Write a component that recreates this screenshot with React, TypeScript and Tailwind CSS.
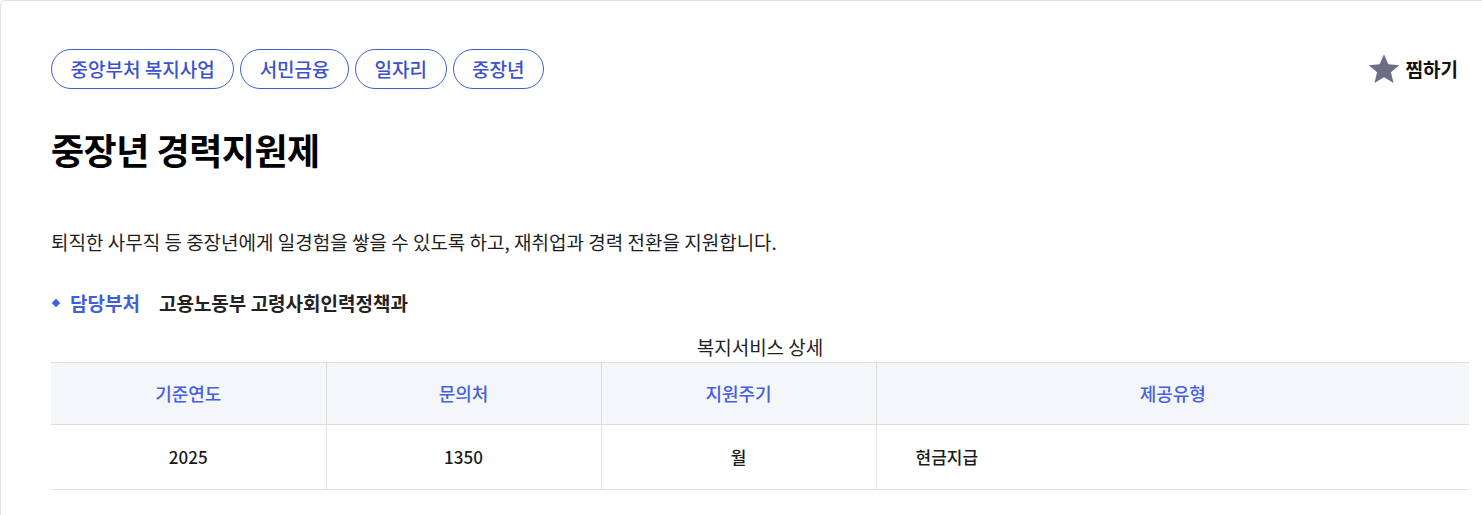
import React from "react";

const tags = ["중앙부처 복지사업", "서민금융", "일자리", "중장년"];

const columns = [
  { label: "기준연도", value: "2025", w: "w-[275px]", align: "text-center" },
  { label: "문의처", value: "1350", w: "w-[275px]", align: "text-center" },
  { label: "지원주기", value: "월", w: "w-[275px]", align: "text-center" },
  { label: "제공유형", value: "현금지급", w: "", align: "text-left pl-[39px]" },
];

function StarIcon() {
  return (
    <svg width="36" height="34" viewBox="0 0 24 24" aria-hidden="true">
      <path
        d="M12 1.6l3.1 7.1 7.6.6-5.8 5 1.8 7.5L12 17.8l-6.7 4 1.8-7.5-5.8-5 7.6-.6z"
        fill="#6b6e85"
      />
    </svg>
  );
}

export default function App() {
  return (
    <div
      className="min-h-[515px] bg-white"
      style={{ fontFamily: '"Noto Sans CJK KR", "Noto Sans", sans-serif' }}
    >
      <div className="w-[1520px] rounded-tl-[6px] border-l border-t border-[#e2e2e2] pl-[50px] pt-[48px] pb-[25px]">
        <div className="w-[1418px]">
          <div className="flex items-center justify-between">
            <div className="flex gap-[6px]">
              {tags.map((t) => (
                <span
                  key={t}
                  className="flex h-[40px] items-center rounded-full border border-[#3f5fd8] px-[18.5px] text-[19px] font-medium text-[#3a52cf]"
                >
                  {t}
                </span>
              ))}
            </div>
            <button
              type="button"
              className="mr-[11px] flex items-center gap-[4px] text-[19px] font-bold text-[#111]"
            >
              <StarIcon />
              찜하기
            </button>
          </div>

          <h1 className="mt-[34px] text-[36px] font-bold leading-[52px] tracking-[-0.5px] text-black">
            중장년 경력지원제
          </h1>

          <p className="mt-[52px] text-[19px] leading-[30px] text-[#1e1e1e]">
            퇴직한 사무직 등 중장년에게 일경험을 쌓을 수 있도록 하고, 재취업과 경력 전환을 지원합니다.
          </p>

          <div className="mt-[31px] flex items-center text-[19px] leading-[30px]">
            <span className="ml-[2px] mr-[11px] h-[6px] w-[6px] rotate-45 bg-[#3f5fd8]" />
            <span className="font-semibold text-[#3f5fd8]">담당부처</span>
            <span className="ml-[19px] font-semibold text-[#222]">
              고용노동부 고령사회인력정책과
            </span>
          </div>

          <table className="mt-[15px] w-full border-collapse">
            <caption className="pb-[2px] text-[19px] leading-[27px] text-[#222]">
              복지서비스 상세
            </caption>
            <thead>
              <tr className="border-y border-[#dddddd] bg-[#f5f6fa]">
                {columns.map((c, i) => (
                  <th
                    key={c.label}
                    className={`h-[62px] ${c.w} text-center text-[18px] font-medium text-[#4460e0] ${
                      i > 0 ? "border-l border-[#dddddd]" : ""
                    }`}
                  >
                    {c.label}
                  </th>
                ))}
              </tr>
            </thead>
            <tbody>
              <tr className="border-b border-[#dddddd]">
                {columns.map((c, i) => (
                  <td
                    key={c.label}
                    className={`h-[65px] ${c.align} text-[17px] font-medium text-[#1a1a1a] ${
                      i > 0 ? "border-l border-[#e6e6e6]" : ""
                    }`}
                  >
                    {c.value}
                  </td>
                ))}
              </tr>
            </tbody>
          </table>
        </div>
      </div>
    </div>
  );
}
